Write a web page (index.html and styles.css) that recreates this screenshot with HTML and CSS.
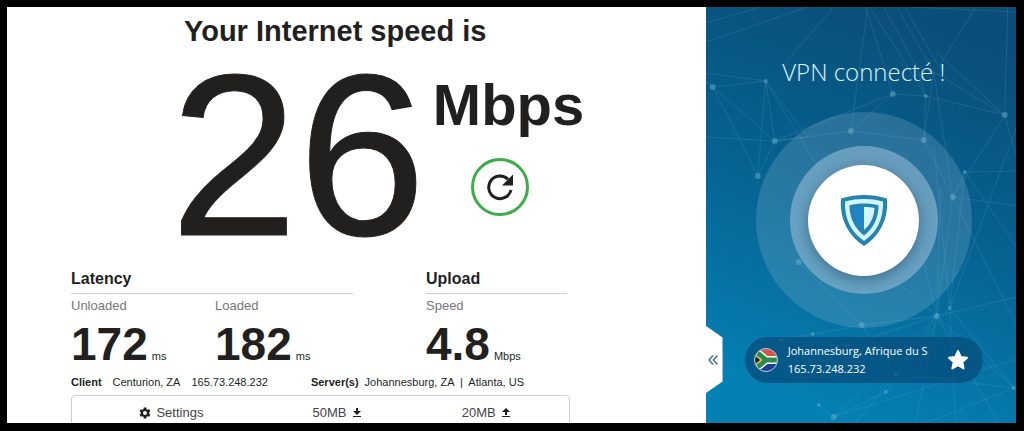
FILE: index.html
```html
<!DOCTYPE html>
<html lang="en">
<head>
  <meta charset="utf-8">
  <meta name="viewport" content="width=device-width, initial-scale=1.0">
  <title>Internet speed test</title>
  <link rel="stylesheet" href="styles.css">
</head>
<body>

<main class="speed">
  <h1>Your Internet speed is</h1>

  <div class="result">
    <div class="result-value">26</div>
    <div class="result-side">
      <div class="result-unit">Mbps</div>
      <button class="refresh" type="button" aria-label="Restart test">
        <svg viewBox="0 0 28 28" width="28" height="28">
          <path d="M25 17A11.300 11.300 0 1 1 22 6.300" fill="none" stroke="#1f1f1f" stroke-width="3"/>
          <path d="M27 1.500V12.500H16Z" fill="#1f1f1f"/>
        </svg>
      </button>
    </div>
  </div>

  <div class="details">
    <section>
      <h2>Latency</h2>
      <div class="metrics two">
        <div>
          <div class="label">Unloaded</div>
          <div class="metric"><b>172</b> <span>ms</span></div>
        </div>
        <div>
          <div class="label">Loaded</div>
          <div class="metric"><b>182</b> <span>ms</span></div>
        </div>
      </div>
    </section>
    <section>
      <h2>Upload</h2>
      <div class="metrics">
        <div>
          <div class="label">Speed</div>
          <div class="metric"><b>4.8</b> <span>Mbps</span></div>
        </div>
      </div>
    </section>
  </div>

  <div class="info">
    <div class="client"><b>Client</b><span>Centurion, ZA</span><span>165.73.248.232</span></div>
    <div class="server"><b>Server(s)</b><span>Johannesburg, ZA &nbsp;|&nbsp; Atlanta, US</span></div>
  </div>

  <div class="options">
    <button type="button">
      <svg viewBox="0 0 24 24" width="12" height="12" fill="#1f1f1f" fill-rule="evenodd"><path d="M9.500 1h5l.6 3.300 2 1.200 3.200-1.200 2.500 4.400-2.600 2.100v2.400l2.600 2.100-2.500 4.400-3.200-1.200-2 1.200-.6 3.300h-5l-.6-3.300-2-1.200-3.200 1.200-2.500-4.400 2.600-2.100v-2.400L1.200 8.700l2.500-4.400 3.200 1.200 2-1.200zM12 8a4 4 0 1 0 0 8 4 4 0 0 0 0-8z"/></svg>
      Settings
    </button>
    <button type="button">
      50MB
      <svg viewBox="0 0 10 12" width="10" height="12" fill="#1f1f1f"><path d="M4 1h2v3h3L5 8 1 4h3zM1 9h8v1H1z"/></svg>
    </button>
    <button type="button">
      20MB
      <svg viewBox="0 0 10 12" width="10" height="12" fill="#1f1f1f"><path d="M5 1l4 4H6v3H4V5H1zM1 9h8v1H1z"/></svg>
    </button>
  </div>
</main>

<aside class="vpn">
  <svg class="network" viewBox="0 0 311 416" preserveAspectRatio="xMidYMid slice">
    <g class="lines">
      <path d="M0 35L102 0M0 16L55 0M80 55L128 0M0 74L7 80L60 74L0 66M60 74L52 169L7 80L69 134L60 74L115 165M0 130L69 134L145 124L187 87L220 89L299 108M69 134L187 87M60 74L102 130L69 134L52 169"/>
      <path d="M145 124L162 0M160 0L187 87M164 0L220 89L211 60L178 0M191 0L228 65M199 0L233 60L270 0M218 133L145 124M218 133L228 65L299 108L230 45M218 133L220 89M228 65L247 190L218 133M299 108L302 0M299 108L247 190L259 165L311 164M299 108L311 150M205 0L311 5"/>
      <path d="M247 190L311 199M259 165L311 240M247 190L311 320M247 190L231 309L235 180M228 140L244 301L259 165M311 120L244 301M205 200L231 309L150 240M231 309L156 318L190 367L244 301L308 381L231 309M231 309L128 410L311 352M180 385L231 309L293 416M190 367L308 381L220 416M156 318L75 333L141 338L231 309M113 398L128 410L180 385M231 309L311 290M190 367L150 416M244 301L250 416M231 309L210 416M93 255L156 318"/>
    </g>
    <g class="nodes">
      <circle cx="7" cy="80" r="3"/><circle cx="60" cy="74" r="2"/><circle cx="69" cy="134" r="3"/><circle cx="52" cy="169" r="3"/>
      <circle cx="145" cy="124" r="3"/><circle cx="187" cy="87" r="3"/><circle cx="220" cy="89" r="2"/><circle cx="218" cy="133" r="3"/>
      <circle cx="299" cy="108" r="3"/><circle cx="247" cy="190" r="3"/><circle cx="259" cy="165" r="2"/><circle cx="93" cy="255" r="3"/>
      <circle cx="156" cy="318" r="3"/><circle cx="231" cy="309" r="3"/><circle cx="244" cy="301" r="2"/><circle cx="190" cy="367" r="2"/>
      <circle cx="180" cy="385" r="2"/><circle cx="128" cy="410" r="3"/><circle cx="308" cy="381" r="2"/><circle cx="75" cy="333" r="2"/>
      <circle cx="107" cy="327" r="2"/><circle cx="141" cy="338" r="2"/><circle cx="113" cy="398" r="2"/>
    </g>
  </svg>

  <button class="collapse" type="button" aria-label="Collapse">
    <svg viewBox="0 0 12 12" width="12" height="12"><path d="M6 1.500L2 6l4 4.500M10.500 1.500L6.500 6l4 4.500" fill="none" stroke="#2d6f8f" stroke-width="1.300"/></svg>
  </button>

  <h2 class="status">VPN connecté !</h2>

  <div class="halo">
    <div class="ring">
      <button class="power" type="button" aria-label="Disconnect">
        <svg viewBox="0 0 48 52" width="48" height="52">
          <path d="M24 1C31 1 39 2 47 4.500C48.500 24 41 41 24 52C7 41 -0.500 24 1 4.500C9 2 17 1 24 1Z" fill="#2583ad"/>
          <path d="M24 5C30.500 5 37 5.800 43 7.500C43.700 24 37.500 37.500 24 47C10.500 37.500 4.300 24 5 7.500C11 5.800 17.500 5 24 5Z" fill="#d3f5ff"/>
          <path d="M24 9.500C29 9.500 34 10 38.500 11.200C38.500 23 34 34 24 41.500C14 34 9.500 23 9.500 11.200C14 10 19 9.500 24 9.500Z" fill="#2583ad"/>
          <path d="M24 13V36C17.500 30.500 14 23 13.500 14Z" fill="#1f86cb"/>
          <path d="M24 13C28 13 31.500 13.300 34.500 14C34 23 30.500 30.500 24 36Z" fill="#d3f5ff"/>
        </svg>
      </button>
    </div>
  </div>

  <div class="location">
    <svg class="flag" viewBox="0 0 24 24" width="24" height="24">
      <clipPath id="round"><circle cx="12" cy="12" r="11"/></clipPath>
      <g clip-path="url(#round)">
        <path d="M0 0H24V12H0Z" fill="#d9534a"/>
        <path d="M0 12H24V24H0Z" fill="#1c3f9c"/>
        <path d="M0 2L12 12H24M0 22L12 12" fill="none" stroke="#fff" stroke-width="8"/>
        <path d="M0 2L12 12H24M0 22L12 12" fill="none" stroke="#2c8a4b" stroke-width="5"/>
        <path d="M0 5L8 12L0 19Z" fill="#e5b64a"/>
        <path d="M0 7L6 12L0 17Z" fill="#16232b"/>
      </g>
      <circle cx="12" cy="12" r="11.500" fill="none" stroke="#b9d3df"/>
    </svg>
    <div class="place">
      <div>Johannesburg, Afrique du S</div>
      <div>165.73.248.232</div>
    </div>
    <button class="favorite" type="button" aria-label="Favorite">
      <svg viewBox="0 0 22 22" width="22" height="22"><path d="M11 2L13.700 8L20 8.700L15.300 13L16.600 19.500L11 16.200L5.400 19.500L6.700 13L2 8.700L8.300 8Z" fill="#fff" stroke="#fff" stroke-width="2" stroke-linejoin="round"/></svg>
    </button>
  </div>
</aside>

</body>
</html>
```
FILE: styles.css
```css
* {
  box-sizing: border-box;
}

body {
  margin: 0;
  height: 100vh;
  display: grid;
  grid-template-columns: minmax(0, 9fr) minmax(0, 4fr);
  grid-template-rows: minmax(0, 1fr);
  border: 7px solid #000;
  border-bottom-width: 8px;
  border-right-width: 8px;
  overflow: hidden;
  background: #fff;
  color: #221f1f;
  font-family: "Liberation Sans", Arial, sans-serif;
}

h1, h2 {
  margin: 0;
}

button {
  padding: 0;
  border: none;
  background: none;
  color: inherit;
  font: inherit;
  cursor: pointer;
}

svg {
  display: block;
}

/* speed test */
.speed {
  padding: 7px 64px 0;
  overflow: hidden;
}

h1 {
  padding-left: 113px;
  font-size: 29px;
  line-height: 34px;
  white-space: nowrap;
}

.result {
  display: flex;
  gap: 7px;
  margin-top: 18px;
  padding-left: 99px;
}

.result-value {
  font-size: 230px;
  line-height: 180px;
  -webkit-text-stroke: 1px #221f1f;
}

.result-side {
  padding-top: 9px;
}

.result-unit {
  font-size: 58px;
  font-weight: bold;
  line-height: 60px;
}

.refresh {
  display: flex;
  align-items: center;
  justify-content: center;
  width: 58px;
  height: 58px;
  margin: 23px 0 0 38px;
  border: 3px solid #3fab49;
  border-radius: 50%;
}

.details {
  display: grid;
  grid-template-columns: 2fr 1fr;
  gap: 73px;
  max-width: 496px;
  margin-top: 23px;
}

.details h2 {
  padding-bottom: 4px;
  border-bottom: 1px solid #cfcfcf;
  font-size: 16px;
  line-height: 20px;
}

.metrics {
  display: grid;
  gap: 6px;
  margin-top: 4px;
}

.two {
  grid-template-columns: 1fr 1fr;
}

.label {
  color: #777;
  font-size: 13px;
  line-height: 16px;
}

.metric {
  display: flex;
  align-items: baseline;
  gap: 4px;
  margin-top: 7px;
  font-size: 11px;
}

.metric b {
  font-size: 46px;
  line-height: 46px;
}

.info {
  display: flex;
  gap: 43px;
  margin-top: 8px;
  font-size: 11px;
  line-height: 14px;
  white-space: nowrap;
}

.client {
  display: flex;
  gap: 11px;
}

.server {
  display: flex;
  gap: 6px;
}

.options {
  display: grid;
  grid-template-columns: 6fr 4fr 5fr;
  max-width: 499px;
  margin-top: 6px;
  padding: 9px 0;
  border: 1px solid #cfcfcf;
  border-radius: 4px;
  color: #444;
  font-size: 13px;
  line-height: 16px;
}

.options button {
  display: flex;
  align-items: center;
  justify-content: center;
  gap: 5px;
}

/* vpn panel */
.vpn {
  position: relative;
  display: flex;
  flex-direction: column;
  align-items: center;
  padding: 50px 0 0 6px;
  background: linear-gradient(200deg, #0a4f7a 10%, #06608f 45%, #0580b2 90%);
  color: #fff;
  font-family: "Open Sans", "Noto Sans", sans-serif;
}

.network {
  position: absolute;
  inset: 0;
  width: 100%;
  height: 100%;
}

.lines {
  fill: none;
  stroke: #7cc0dc;
  stroke-opacity: 0.16;
}

.nodes {
  fill: #6db4d2;
  fill-opacity: 0.45;
}

.collapse {
  position: absolute;
  left: -1px;
  top: 318px;
  display: flex;
  align-items: center;
  width: 18px;
  height: 69px;
  padding-left: 2px;
  background: #fff;
  clip-path: polygon(0 0, 100% 18%, 100% 82%, 0 100%);
}

.status {
  position: relative;
  color: #d9f3fb;
  font-size: 24px;
  font-weight: 300;
  line-height: 30px;
  white-space: nowrap;
}

.halo, .ring, .power {
  position: relative;
  display: flex;
  align-items: center;
  justify-content: center;
  border-radius: 50%;
}

.halo {
  width: 216px;
  height: 216px;
  margin-top: 25px;
  background: rgba(150, 190, 215, 0.23);
}

.ring {
  width: 148px;
  height: 148px;
  background: rgba(170, 200, 222, 0.5);
}

.power {
  width: 111px;
  height: 111px;
  background: #fff;
  box-shadow: 0 4px 14px rgba(20, 60, 90, 0.5);
}

.location {
  position: relative;
  display: flex;
  align-items: center;
  width: 238px;
  height: 46px;
  margin-top: 9px;
  padding: 0 14px 0 9px;
  border-radius: 23px;
  background: rgba(5, 75, 122, 0.72);
}

.place {
  flex: 1;
  margin-left: 10px;
  font-size: 11px;
  line-height: 18px;
  white-space: nowrap;
}
```
